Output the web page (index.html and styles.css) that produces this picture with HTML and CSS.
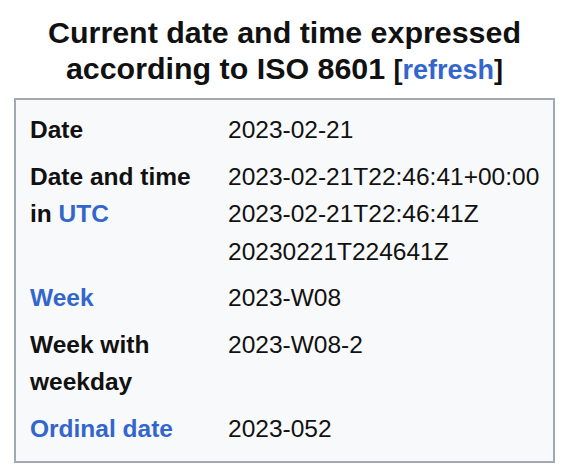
FILE: index.html
```html
<!DOCTYPE html>
<html lang="en">
<head>
<meta charset="utf-8">
<title>ISO 8601</title>
<link rel="stylesheet" href="styles.css">
</head>
<body>
<div class="wrap">
  <h1 class="title">Current date and time expressed according to ISO 8601 <span class="small">[<a class="link" href="#">refresh</a>]</span></h1>
  <div class="box">
    <div class="label">Date</div>
    <div class="value">2023-02-21</div>
    <div class="label">Date and time in <a class="link" href="#">UTC</a></div>
    <div class="value">2023-02-21T22:46:41+00:00<br>2023-02-21T22:46:41Z<br>20230221T224641Z</div>
    <div class="label"><a class="link" href="#">Week</a></div>
    <div class="value">2023-W08</div>
    <div class="label">Week with weekday</div>
    <div class="value">2023-W08-2</div>
    <div class="label"><a class="link" href="#">Ordinal date</a></div>
    <div class="value">2023-052</div>
  </div>
</div>
</body>
</html>
```
FILE: styles.css
```css
html, body {
  margin: 0;
  padding: 0;
  background: #fff;
}
body {
  font-family: "Liberation Sans", Arial, Helvetica, sans-serif;
  color: #111;
}
.wrap {
  padding: 14px 15px 0 14px;
  width: 541px;
}
.title {
  margin: 0;
  text-align: center;
  font-size: 30.4px;
  line-height: 36px;
  font-weight: bold;
  padding: 0 6px;
}
.small {
  font-size: 27px;
}
.link {
  color: #3366cc;
  text-decoration: none;
}
.box {
  margin-top: 10px;
  border: 2px solid #a2a9b1;
  background: #f8f9fa;
  display: grid;
  grid-template-columns: 170px 1fr;
  column-gap: 28px;
  row-gap: 9px;
  padding: 11px 10px 14px 14px;
  font-size: 24.5px;
  line-height: 37.5px;
}
.label {
  font-weight: bold;
}
.value {
  font-weight: normal;
}
```
